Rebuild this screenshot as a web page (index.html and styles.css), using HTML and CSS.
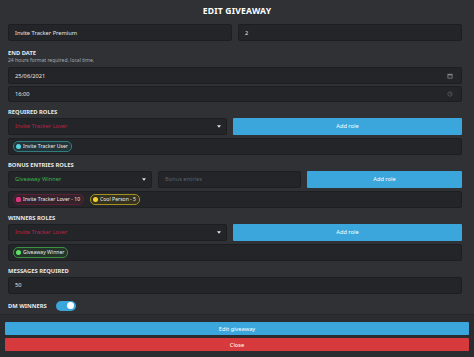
FILE: index.html
```html
<!DOCTYPE html>
<html lang="en">
<head>
    <meta charset="UTF-8">
    <meta name="viewport" content="width=device-width, initial-scale=1.0">
    <title>Edit Giveaway</title>
    <link rel="stylesheet" href="styles.css">
</head>
<body>
    <div class="modal">
        <h1 class="title">EDIT GIVEAWAY</h1>
        <div class="content">
            <div class="row">
                <div class="box grow">Invite Tracker Premium</div>
                <div class="box grow">2</div>
            </div>

            <div class="label first">END DATE</div>
            <div class="hint">24 hours format required, local time.</div>
            <div class="box tall">
                <span>25/06/2021</span>
                <svg class="icon" viewBox="0 0 10 10"><rect x="1.5" y="2" width="7" height="6.5" fill="none" stroke="#8a8d92" stroke-width="1.2"/><rect x="1.5" y="2" width="7" height="2" fill="#8a8d92"/></svg>
            </div>
            <div class="box time">
                <span>16:00</span>
                <svg class="icon" viewBox="0 0 10 10"><circle cx="5" cy="5" r="3.6" fill="none" stroke="#5f6267" stroke-width="1.2"/><path d="M5 3v2.2h1.6" fill="none" stroke="#5f6267" stroke-width="1"/></svg>
            </div>

            <div class="label">REQUIRED ROLES</div>
            <div class="row">
                <div class="box select wide lover-text">
                    <span>Invite Tracker Lover</span>
                    <svg class="caret" viewBox="0 0 6 4"><path d="M0 0h6L3 4z" fill="#e6e6e6"/></svg>
                </div>
                <button class="btn blue grow">Add role</button>
            </div>
            <div class="chips">
                <span class="chip user"><i class="dot"></i>Invite Tracker User</span>
            </div>

            <div class="label">BONUS ENTRIES ROLES</div>
            <div class="row">
                <div class="box select narrow winner-text">
                    <span>Giveaway Winner</span>
                    <svg class="caret" viewBox="0 0 6 4"><path d="M0 0h6L3 4z" fill="#e6e6e6"/></svg>
                </div>
                <div class="box entries placeholder">Bonus entries</div>
                <button class="btn blue grow">Add role</button>
            </div>
            <div class="chips">
                <span class="chip lover"><i class="dot"></i>Invite Tracker Lover - 10</span>
                <span class="chip cool"><i class="dot"></i>Cool Person - 5</span>
            </div>

            <div class="label">WINNERS ROLES</div>
            <div class="row">
                <div class="box select wide lover-text">
                    <span>Invite Tracker Lover</span>
                    <svg class="caret" viewBox="0 0 6 4"><path d="M0 0h6L3 4z" fill="#e6e6e6"/></svg>
                </div>
                <button class="btn blue grow">Add role</button>
            </div>
            <div class="chips">
                <span class="chip winner"><i class="dot"></i>Giveaway Winner</span>
            </div>

            <div class="label">MESSAGES REQUIRED</div>
            <div class="box">50</div>

            <div class="toggle-row">
                <span class="label inline">DM WINNERS</span>
                <span class="switch"><i class="knob"></i></span>
            </div>
        </div>
        <div class="footer">
            <button class="btn blue">Edit giveaway</button>
            <button class="btn red">Close</button>
        </div>
    </div>
</body>
</html>
```

FILE: styles.css
```css
body {
    margin: 0;
    font-family: "Noto Sans", "Open Sans", sans-serif;
    background-color: #2f3135;
    color: #e8e8e8;
}
.modal {
    height: 357px;
    display: flex;
    flex-direction: column;
}
.title {
    margin: 0;
    height: 24px;
    line-height: 23px;
    text-align: center;
    font-size: 8.6px;
    font-weight: 700;
    color: #ffffff;
    letter-spacing: 0.2px;
}
.content {
    flex: 1;
    padding: 0 12px 0 8px;
}
.row {
    display: flex;
    gap: 6px;
}
.grow {
    flex: 1;
}
.box {
    box-sizing: border-box;
    height: 17px;
    margin-bottom: 2px;
    display: flex;
    align-items: center;
    justify-content: space-between;
    padding: 0 6px;
    background-color: #232528;
    border: 1px solid #1c1e21;
    border-radius: 2px;
    font-size: 5.7px;
    color: #e6e6e6;
}
.box.tall {
    height: 17px;
}
.box.time {
    height: 16px;
}
.select.wide {
    width: 219px;
    flex: none;
}
.select.narrow {
    width: 144px;
    flex: none;
}
.entries {
    width: 143px;
    flex: none;
}
.placeholder {
    color: #5d6066;
}
.lover-text {
    color: #b8234a;
}
.winner-text {
    color: #3fb34f;
}
.caret {
    width: 4px;
    height: 3px;
    margin-right: -1px;
}
.icon {
    width: 6px;
    height: 6px;
    margin-right: 2px;
}
.label {
    margin: 5.5px 0 2px;
    font-size: 5.8px;
    font-weight: 700;
    line-height: 8px;
    color: #e8e8e8;
}
.label.first {
    margin: 6px 0 0;
}
.label.inline {
    margin: 0;
}
.hint {
    font-size: 5px;
    line-height: 7px;
    color: #a7a9ad;
    margin-bottom: 3px;
}
.btn {
    box-sizing: border-box;
    height: 17px;
    border: none;
    border-radius: 1px;
    font-family: inherit;
    font-size: 5.7px;
    color: #ffffff;
    cursor: pointer;
    padding: 0;
}
.blue {
    background-color: #3ba6dc;
}
.red {
    background-color: #d63a3c;
}
.chips {
    box-sizing: border-box;
    height: 17.5px;
    margin: 1px 0 0;
    display: flex;
    align-items: center;
    gap: 6px;
    padding: 0 4px;
    background-color: #232528;
    border: 1px solid #1c1e21;
    border-radius: 2px;
}
.chip {
    display: flex;
    align-items: center;
    gap: 2px;
    height: 9px;
    padding: 0 3px 0 2px;
    border-radius: 5px;
    border: 1px solid;
    font-size: 5.1px;
    color: #ececec;
}
.dot {
    width: 5px;
    height: 5px;
    border-radius: 50%;
}
.user {
    border-color: #2f7f80;
    background-color: #24353a;
}
.user .dot {
    background-color: #54d6e0;
}
.lover {
    border-color: #5c2136;
    background-color: #35222a;
}
.lover .dot {
    background-color: #d8357a;
    border-radius: 1.5px;
}
.cool {
    border-color: #a48f22;
    background-color: #35321f;
}
.cool .dot {
    background-color: #f3d22a;
}
.winner {
    border-color: #3b8f45;
    background-color: #233428;
}
.winner .dot {
    background-color: #60e06c;
}
.toggle-row {
    display: flex;
    align-items: center;
    gap: 9px;
    margin-top: 7px;
    height: 10px;
}
.switch {
    position: relative;
    width: 20px;
    height: 10px;
    border-radius: 5px;
    background-color: #3ba6dc;
}
.knob {
    position: absolute;
    top: 1.5px;
    right: 2px;
    width: 7px;
    height: 7px;
    border-radius: 50%;
    background-color: #ffffff;
}
.footer {
    display: flex;
    flex-direction: column;
    gap: 3px;
    padding: 7px 5px 6px;
    background-color: #2a2c30;
    border-top: 1px solid #25272a;
}
.footer .btn {
    height: 13px;
}
```
